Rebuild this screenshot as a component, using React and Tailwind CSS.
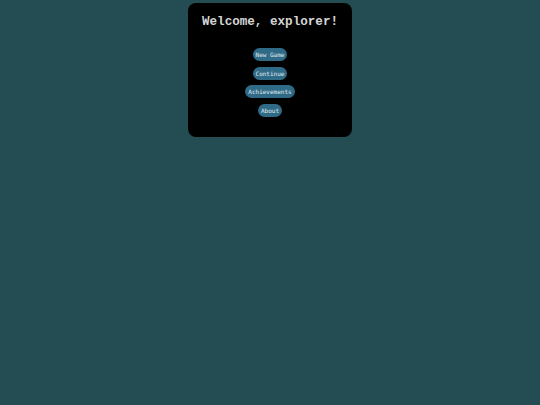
export default function App() {
  const items = ["New Game", "Continue", "Achievements", "About"];
  return (
    <div className="min-h-[405px] w-full bg-[#234d52] flex justify-center pt-[3px]" style={{ fontFamily: '"Liberation Mono", monospace' }}>
      <div className="w-[164px] h-[134px] bg-black rounded-[8px] flex flex-col items-center pt-[12px]">
        <h1 className="text-[12.6px] font-bold text-[#d4d4d4] leading-[14px]">Welcome, explorer!</h1>
        <div className="flex flex-col items-center gap-[5.5px] mt-[19px]">
          {items.map((t) => (
            <button key={t} className="bg-[#2f6a86] text-[#e0ecf2] text-[6px] leading-[7px] px-[3px] py-[3px] rounded-full" style={{ fontFamily: '"DejaVu Sans Mono", "Liberation Mono", monospace' }}>
              {t}
            </button>
          ))}
        </div>
      </div>
    </div>
  );
}
